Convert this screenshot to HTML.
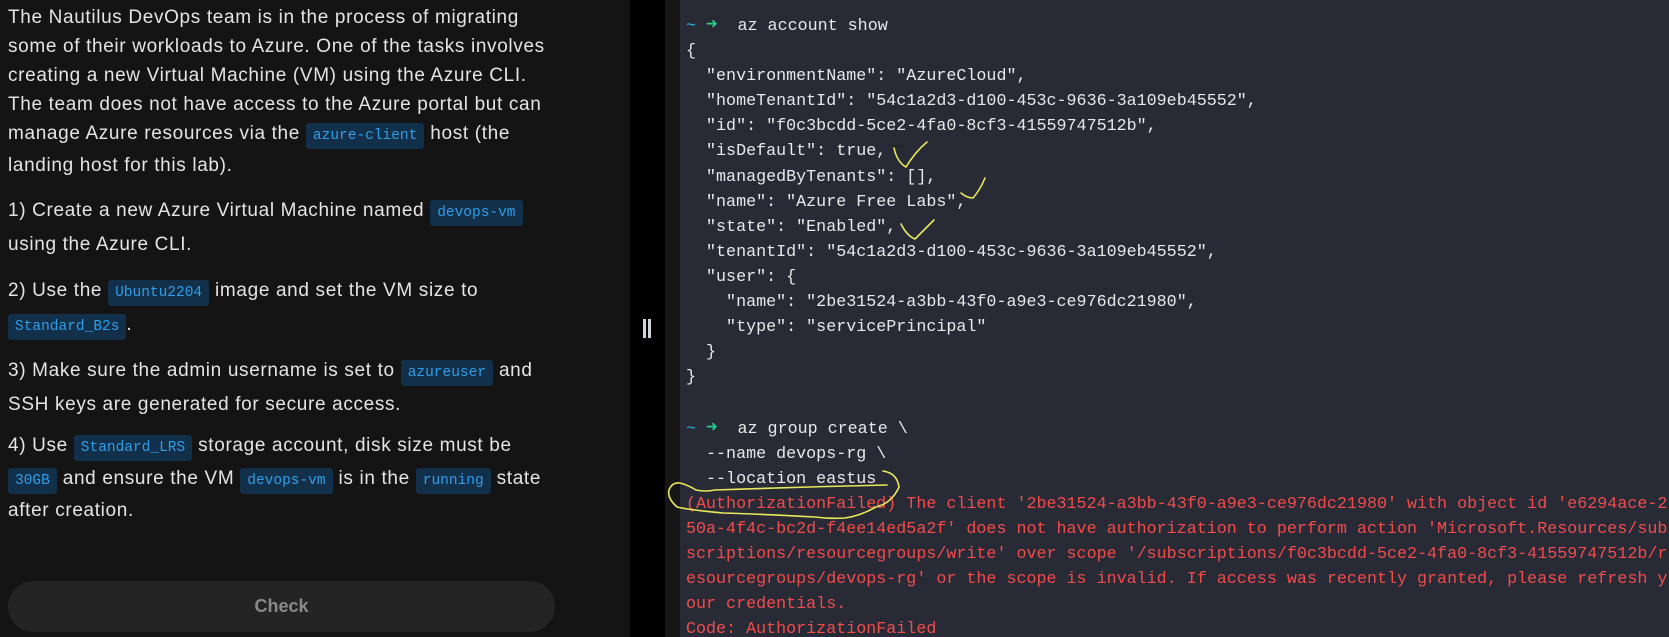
<!DOCTYPE html>
<html><head><meta charset="utf-8"><style>
*{margin:0;padding:0;box-sizing:border-box}
body{width:1669px;height:637px;overflow:hidden;background:#000;position:relative;font-family:"Liberation Sans",sans-serif}
#left{position:absolute;left:0;top:0;width:630px;height:637px;background:#141414;color:#e4e4e4;font-size:19px;letter-spacing:0.65px}
#left p{position:absolute;left:8px;line-height:31px;white-space:nowrap}
code{font-family:"Liberation Mono",monospace;font-size:14.5px;letter-spacing:0;color:#2f9de8;background:#12304a;padding:5px 7px;border-radius:3px}
#btn{position:absolute;left:8px;top:581px;width:547px;height:51px;border-radius:26px;background:#242424;color:#8a8a8a;font-weight:bold;font-size:18px;text-align:center;line-height:51px;letter-spacing:0}
#blk{position:absolute;left:630px;top:0;width:35px;height:637px;background:#000}
#hdl{position:absolute;left:643px;top:319px;width:8px;height:19px;border-left:3px solid #cfd3dc;border-right:3px solid #cfd3dc}
#gap{position:absolute;left:665px;top:0;width:15px;height:637px;background:#161616}
#term{position:absolute;left:680px;top:0;width:989px;height:637px;background:#282a36;padding:13px 0 0 6px;font-family:"Liberation Mono",monospace;font-size:16.7px;line-height:25.1px;color:#e8e8e8;white-space:pre;overflow:hidden}
.c{color:#29b8db}.g{color:#23d18b;font-weight:bold;font-size:19px}.r{color:#f14c4c}
svg{position:absolute;left:0;top:0}
</style></head><body>
<div id="left">
<p style="top:3px;line-height:29px">The Nautilus DevOps team is in the process of migrating<br>some of their workloads to Azure. One of the tasks involves<br>creating a new Virtual Machine (VM) using the Azure CLI.<br>The team does not have access to the Azure portal but can<br>manage Azure resources via the <code>azure-client</code> host (the<br>landing host for this lab).</p>
<p style="top:195px">1) Create a new Azure Virtual Machine named <code>devops-vm</code><br>using the Azure CLI.</p>
<p style="top:275px">2) Use the <code>Ubuntu2204</code> image and set the VM size to<br><code>Standard_B2s</code>.</p>
<p style="top:355px">3) Make sure the admin username is set to <code>azureuser</code> and<br>SSH keys are generated for secure access.</p>
<p style="top:431px;line-height:30.5px">4) Use <code>Standard_LRS</code> storage account, disk size must be<br><code>30GB</code> and ensure the VM <code>devops-vm</code> is in the <code>running</code> state<br>after creation.</p>
<div id="btn">Check</div>
</div>
<div id="blk"></div><div id="hdl"></div><div id="gap"></div>
<div id="term"><span class="c">~</span> <span class="g">➜</span>  az account show
{
  "environmentName": "AzureCloud",
  "homeTenantId": "54c1a2d3-d100-453c-9636-3a109eb45552",
  "id": "f0c3bcdd-5ce2-4fa0-8cf3-41559747512b",
  "isDefault": true,
  "managedByTenants": [],
  "name": "Azure Free Labs",
  "state": "Enabled",
  "tenantId": "54c1a2d3-d100-453c-9636-3a109eb45552",
  "user": {
    "name": "2be31524-a3bb-43f0-a9e3-ce976dc21980",
    "type": "servicePrincipal"
  }
}

<span class="c">~</span> <span class="g">➜</span>  az group create \
  --name devops-rg \
  --location eastus
<span class="r">(AuthorizationFailed) The client '2be31524-a3bb-43f0-a9e3-ce976dc21980' with object id 'e6294ace-2
50a-4f4c-bc2d-f4ee14ed5a2f' does not have authorization to perform action 'Microsoft.Resources/sub
scriptions/resourcegroups/write' over scope '/subscriptions/f0c3bcdd-5ce2-4fa0-8cf3-41559747512b/r
esourcegroups/devops-rg' or the scope is invalid. If access was recently granted, please refresh y
our credentials.
Code: AuthorizationFailed</span></div>
<svg width="1669" height="637" fill="none" stroke-linecap="round" stroke-linejoin="round">
<path d="M894 146 Q899 145 903 148" stroke="#222" stroke-width="1.5"/>
<path d="M894 148 Q897 162 906 167 Q915 152 927 142" stroke="#e8e85a" stroke-width="1.6"/>
<path d="M961 193 Q967 198 973 198 Q980 190 985 178" stroke="#e8e85a" stroke-width="1.6"/>
<path d="M901 224 Q907 236 915 239 Q924 230 934 220" stroke="#e8e85a" stroke-width="1.6"/>
<path d="M883 471 Q897 473 899 487 Q892 503 876 507 Q860 516 845 518 Q830 519 815 517 Q760 514 723 513 Q690 510 677 507 Q667 498 669 490 Q672 482 680 483 Q688 485 696 490 Q705 492 715 490 Q800 487 887 485" stroke="#e8e85a" stroke-width="1.6"/>
</svg>
</body></html>
